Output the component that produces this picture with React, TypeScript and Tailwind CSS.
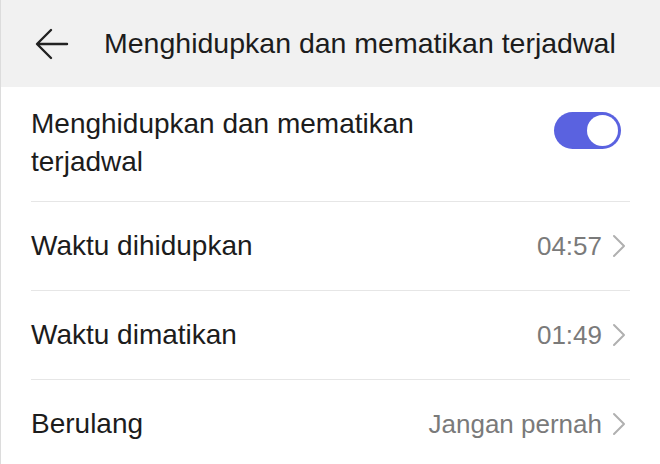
import React from "react";

const Chevron = () => (
  <svg width="14" height="24" viewBox="0 0 14 24" fill="none" className="ml-[10px]">
    <path d="M2 2 L12 12 L2 22" stroke="#b0b0b0" strokeWidth="2" strokeLinecap="round" strokeLinejoin="round" />
  </svg>
);

const Row = ({ label, value }: { label: string; value: string }) => (
  <div className="flex h-[89px] items-center justify-between border-b border-[#e6e6e6]">
    <span className="text-[28px] text-[#1c1c1c]">{label}</span>
    <div className="flex items-center pr-[4px]">
      <span className="text-[26px] text-[#7a7a7a]">{value}</span>
      <Chevron />
    </div>
  </div>
);

export default function App() {
  return (
    <div
      className="w-[660px] h-[464px] overflow-hidden bg-white border-l border-[#dcdcdc]"
      style={{ fontFamily: '"Liberation Sans", Arial, sans-serif' }}
    >
      <div className="h-[87px] bg-[#f1f1f1] flex items-center pl-[34px]">
        <svg width="34" height="32" viewBox="0 0 34 32" fill="none">
          <path d="M32 16 H3 M16 2 L2 16 L16 30" stroke="#222" strokeWidth="2.4" strokeLinecap="round" strokeLinejoin="round" />
        </svg>
        <span className="ml-[35px] text-[28.5px] text-[#1c1c1c]">Menghidupkan dan mematikan terjadwal</span>
      </div>
      <div className="pl-[30px] pr-[30px]">
        <div className="flex h-[115px] items-center justify-between border-b border-[#e6e6e6]">
          <span className="text-[28px] leading-[38px] text-[#1c1c1c] max-w-[440px] mt-[-2px]">
            Menghidupkan dan mematikan terjadwal
          </span>
          <div className="relative w-[67px] h-[37px] rounded-full bg-[#5a62e0] mr-[9px] mt-[-28px]">
            <div className="absolute right-[3px] top-[3px] w-[31px] h-[31px] rounded-full bg-white" />
          </div>
        </div>
        <Row label="Waktu dihidupkan" value="04:57" />
        <Row label="Waktu dimatikan" value="01:49" />
        <Row label="Berulang" value="Jangan pernah" />
      </div>
    </div>
  );
}
